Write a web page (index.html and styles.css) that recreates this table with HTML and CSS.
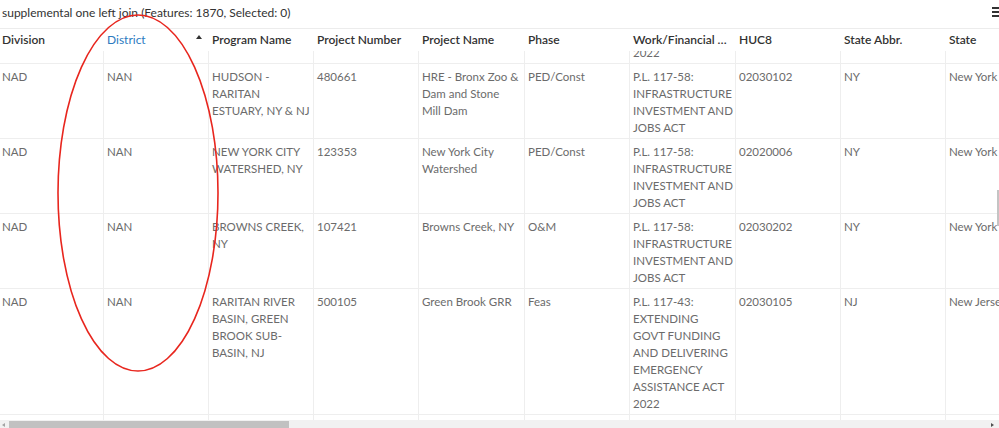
FILE: index.html
```html
<!DOCTYPE html>
<html>
<head>
<meta charset="utf-8">
<link rel="stylesheet" href="styles.css">
</head>
<body>
<div class="panel">
  <div class="titlebar">
    <span class="title">supplemental one left join (Features: 1870, Selected: 0)</span>
    <span class="menu"><i></i><i></i><i></i></span>
  </div>
  <div class="table">
    <div class="row head">
      <div class="cell">Division</div>
      <div class="cell sorted">District<span class="sort"></span></div>
      <div class="cell">Program Name</div>
      <div class="cell">Project Number</div>
      <div class="cell">Project Name</div>
      <div class="cell">Phase</div>
      <div class="cell ell">Work/Financial Allocation</div>
      <div class="cell">HUC8</div>
      <div class="cell">State Abbr.</div>
      <div class="cell">State</div>
    </div>
    <div class="body">
      <div class="rows">
        <div class="row">
          <div class="cell">NAD</div><div class="cell">NAN</div>
          <div class="cell">PASSAIC RIVER BASIN, NJ</div><div class="cell">000000</div>
          <div class="cell">Project</div><div class="cell">Feas</div>
          <div class="cell">P.L. 117-43: EXTENDING <span class="nw">GOVT FUNDING</span> AND DELIVERING EMERGENCY ASSISTANCE ACT 2022</div>
          <div class="cell">02030103</div><div class="cell">NJ</div><div class="cell">New Jersey</div>
        </div>
        <div class="row">
          <div class="cell">NAD</div><div class="cell">NAN</div>
          <div class="cell">HUDSON - RARITAN ESTUARY, NY &amp; NJ</div><div class="cell">480661</div>
          <div class="cell">HRE - Bronx Zoo &amp; Dam and Stone <span class="nw">Mill Dam</span></div><div class="cell">PED/Const</div>
          <div class="cell">P.L. 117-58: INFRASTRUCTURE INVESTMENT AND JOBS ACT</div>
          <div class="cell">02030102</div><div class="cell">NY</div><div class="cell">New York</div>
        </div>
        <div class="row">
          <div class="cell">NAD</div><div class="cell">NAN</div>
          <div class="cell">NEW YORK CITY WATERSHED, NY</div><div class="cell">123353</div>
          <div class="cell">New York City Watershed</div><div class="cell">PED/Const</div>
          <div class="cell">P.L. 117-58: INFRASTRUCTURE INVESTMENT AND JOBS ACT</div>
          <div class="cell">02020006</div><div class="cell">NY</div><div class="cell">New York</div>
        </div>
        <div class="row">
          <div class="cell">NAD</div><div class="cell">NAN</div>
          <div class="cell">BROWNS CREEK, NY</div><div class="cell">107421</div>
          <div class="cell">Browns Creek, NY</div><div class="cell">O&amp;M</div>
          <div class="cell">P.L. 117-58: INFRASTRUCTURE INVESTMENT AND JOBS ACT</div>
          <div class="cell">02030202</div><div class="cell">NY</div><div class="cell">New York</div>
        </div>
        <div class="row">
          <div class="cell">NAD</div><div class="cell">NAN</div>
          <div class="cell">RARITAN RIVER BASIN, GREEN BROOK SUB-BASIN, NJ</div><div class="cell">500105</div>
          <div class="cell">Green Brook GRR</div><div class="cell">Feas</div>
          <div class="cell">P.L. 117-43: EXTENDING <span class="nw">GOVT FUNDING</span> AND DELIVERING EMERGENCY ASSISTANCE ACT 2022</div>
          <div class="cell">02030105</div><div class="cell">NJ</div><div class="cell">New Jersey</div>
        </div>
        <div class="row">
          <div class="cell">NAD</div><div class="cell">NAN</div>
          <div class="cell">&nbsp;</div><div class="cell"></div>
          <div class="cell"></div><div class="cell"></div>
          <div class="cell"></div><div class="cell"></div><div class="cell"></div><div class="cell"></div>
        </div>
      </div>
      <div class="vthumb"></div>
    </div>
    <div class="hscroll">
      <span class="arrow left"></span>
      <div class="hthumb"></div>
      <span class="arrow right"></span>
    </div>
  </div>
  <svg class="annot" width="999" height="428" viewBox="0 0 999 428">
    <ellipse cx="138" cy="193" rx="80" ry="178" fill="none" stroke="#e8261e" stroke-width="1.6"/>
  </svg>
</div>
</body>
</html>
```
FILE: styles.css
```css
html, body {
  margin: 0;
  padding: 0;
  background: #fff;
}
body {
  width: 999px;
  height: 428px;
  overflow: hidden;
  font-family: Lato, "Open Sans", sans-serif;
}
.panel {
  position: relative;
  width: 999px;
  height: 428px;
  overflow: hidden;
}
.titlebar {
  height: 29px;
  display: flex;
  align-items: center;
  justify-content: space-between;
  padding-left: 2px;
  box-sizing: border-box;
  border-bottom: 1px solid #ececec;
}
.title {
  font-size: 12px;
  color: #323232;
  margin-top: -4px;
}
.menu {
  display: flex;
  flex-direction: column;
  gap: 2px;
  width: 8px;
  margin-right: -1px;
  margin-top: -4px;
}
.menu i {
  display: block;
  height: 2px;
  background: #323232;
}
.table {
  display: flex;
  flex-direction: column;
}
.row {
  display: grid;
  grid-template-columns: 103px 105px 105px 105px 106px 105px 106px 105px 105px 105px;
  width: 1050px;
  border-bottom: 1px solid #eeeeee;
}
.cell {
  padding: 4px 1px 2px 3px;
  border-left: 1px solid #eeeeee;
  font-size: 11.5px;
  line-height: 17px;
  color: #6b6b6b;
  overflow: hidden;
}
.nw {
  white-space: nowrap;
}
.cell:first-child {
  border-left: none;
  padding-left: 2px;
}
.head {
  height: 22px;
  border-bottom: none;
  position: relative;
  z-index: 1;
  background: #fff;
}
.head .cell {
  border-left-color: transparent;
  color: #323232;
  font-weight: 600;
  font-size: 12px;
  padding-top: 0;
  padding-bottom: 2px;
  white-space: nowrap;
  display: flex;
  align-items: center;
}
.head .cell.sorted {
  color: #2b7bbf;
  font-weight: 400;
  justify-content: space-between;
  padding-right: 3px;
}
.head .cell.ell {
  display: block;
  line-height: 20px;
  padding-top: 1px;
  text-overflow: ellipsis;
  padding-right: 6px;
}
.sort {
  width: 0;
  height: 0;
  border-left: 3px solid transparent;
  border-right: 3px solid transparent;
  border-bottom: 4px solid #323232;
  margin-right: 3px;
  margin-top: -5px;
}
.body {
  position: relative;
  height: 369px;
  overflow: hidden;
}
.rows {
  margin-top: -113px;
}
.vthumb {
  position: absolute;
  right: 0;
  top: 139px;
  width: 2px;
  height: 36px;
  background: #c4c4c4;
}
.hscroll {
  height: 8px;
  background: #f1f1f1;
  display: flex;
  align-items: center;
  position: relative;
}
.hthumb {
  position: absolute;
  left: 9px;
  top: 1px;
  width: 280px;
  height: 7px;
  background: #c1c1c1;
}
.arrow {
  position: absolute;
  top: 3px;
  width: 0;
  height: 0;
  border-top: 2px solid transparent;
  border-bottom: 2px solid transparent;
}
.arrow.left {
  left: 2px;
  border-right: 3px solid #a3a3a3;
}
.arrow.right {
  right: 5px;
  border-left: 3px solid #505050;
}
.annot {
  position: absolute;
  left: 0;
  top: 0;
  z-index: 2;
  pointer-events: none;
}
```
